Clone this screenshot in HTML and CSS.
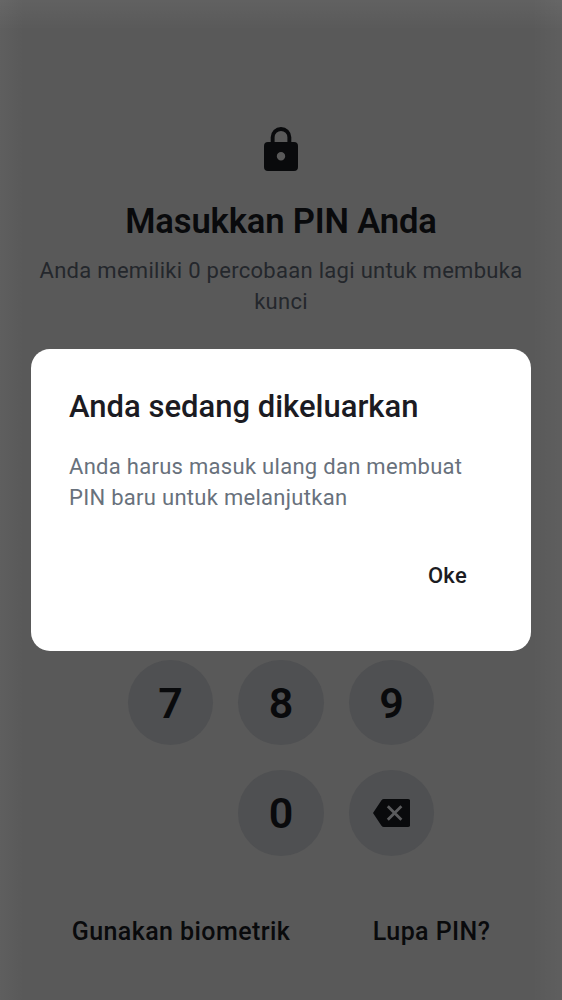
FILE: index.html
```html
<!DOCTYPE html>
<html lang="id">
<head>
<meta charset="utf-8">
<title>PIN</title>
<link rel="stylesheet" href="styles.css">
</head>
<body>
<main class="screen">
  <svg class="lock" width="34" height="44" viewBox="0 0 34 44"><path fill="currentColor" fill-rule="evenodd" d="M6.700 15V10.300a10.300 10.300 0 0 1 20.600 0V15H30a4 4 0 0 1 4 4V40a4 4 0 0 1-4 4H4a4 4 0 0 1-4-4V19a4 4 0 0 1 4-4zM10.600 15h12.800V10.300a6.400 6.400 0 0 0-12.800 0zM17 25a4.200 4.200 0 1 0 0 8.400 4.200 4.200 0 0 0 0-8.400z"/></svg>
  <h1 class="title">Masukkan PIN Anda</h1>
  <p class="hint">Anda memiliki 0 percobaan lagi untuk membuka<br>kunci</p>
  <div class="keypad">
    <button class="key">7</button>
    <button class="key">8</button>
    <button class="key">9</button>
    <span></span>
    <button class="key">0</button>
    <button class="key" aria-label="Hapus"><svg width="37.400" height="28" viewBox="0 0 37.400 28"><path fill="currentColor" d="M11 0H34.900a2.500 2.500 0 0 1 2.500 2.500v23a2.500 2.500 0 0 1-2.500 2.500H11a3 3 0 0 1-2.500-1.300L0 14 8.500 1.300A3 3 0 0 1 11 0z"/><path d="M14.800 7.200l13.600 13.600m0-13.600l-13.600 13.600" class="cross"/></svg></button>
  </div>
  <footer class="actions"><span class="bio">Gunakan biometrik</span><span class="forgot">Lupa PIN?</span></footer>
</main>
<div class="overlay">
  <section class="dialog" role="dialog">
    <h2 class="dialog-title">Anda sedang dikeluarkan</h2>
    <p class="dialog-text">Anda harus masuk ulang dan membuat<br>PIN baru untuk melanjutkan</p>
    <button class="ok">Oke</button>
  </section>
</div>
</body>
</html>
```
FILE: styles.css
```css
* { box-sizing: border-box; margin: 0; }
body { font-family: Roboto, sans-serif; }
button { border: 0; padding: 0; font-family: inherit; }
.screen {
  height: 1000px;
  padding-top: 127px;
  background:
    linear-gradient(to bottom, rgba(255,255,255,.05), transparent 30px),
    linear-gradient(to right, rgba(255,255,255,.035), transparent 24px),
    linear-gradient(to left, rgba(255,255,255,.035), transparent 30px),
    #595959;
  color: #090a0c;
  display: flex;
  flex-direction: column;
  align-items: center;
  overflow: hidden;
}
.lock { flex: none; }
.title { margin-top: 29px; font-size: 34.600px; line-height: 42px; font-weight: 600; letter-spacing: -.15px; white-space: nowrap; }
.hint { margin-top: 13px; font-size: 22px; line-height: 31px; letter-spacing: .29px; color: #24272c; text-align: center; white-space: nowrap; }
.keypad { margin-top: 342.900px; display: grid; grid-template-columns: repeat(3, 85.300px); grid-auto-rows: 85.300px; gap: 25.200px; }
.key { display: flex; align-items: center; justify-content: center; border-radius: 50%; background: #4f5052; color: #090a0c; font-size: 43px; font-weight: 600; }
.cross { fill: none; stroke: #5a5b5d; stroke-width: 2.800; }
.actions { margin-top: 61.300px; width: 418.500px; display: flex; justify-content: space-between; font-size: 25px; line-height: 30px; font-weight: 500; letter-spacing: .42px; }
.overlay { position: absolute; inset: 0; display: flex; align-items: center; justify-content: center; padding-bottom: .5px; }
.dialog { width: 500px; height: 301.500px; border-radius: 19px; background: #fff; padding: 39px 38px 0; display: flex; flex-direction: column; }
.dialog-title { font-size: 31px; line-height: 38px; font-weight: 500; color: #1b1b22; white-space: nowrap; }
.dialog-text { margin-top: 24.500px; font-size: 22px; line-height: 31px; letter-spacing: .29px; color: #68717c; white-space: nowrap; }
.ok { margin: 50px 26px 0 auto; background: none; font-size: 22px; line-height: 26px; font-weight: 500; color: #1b1b22; letter-spacing: .3px; }
```
